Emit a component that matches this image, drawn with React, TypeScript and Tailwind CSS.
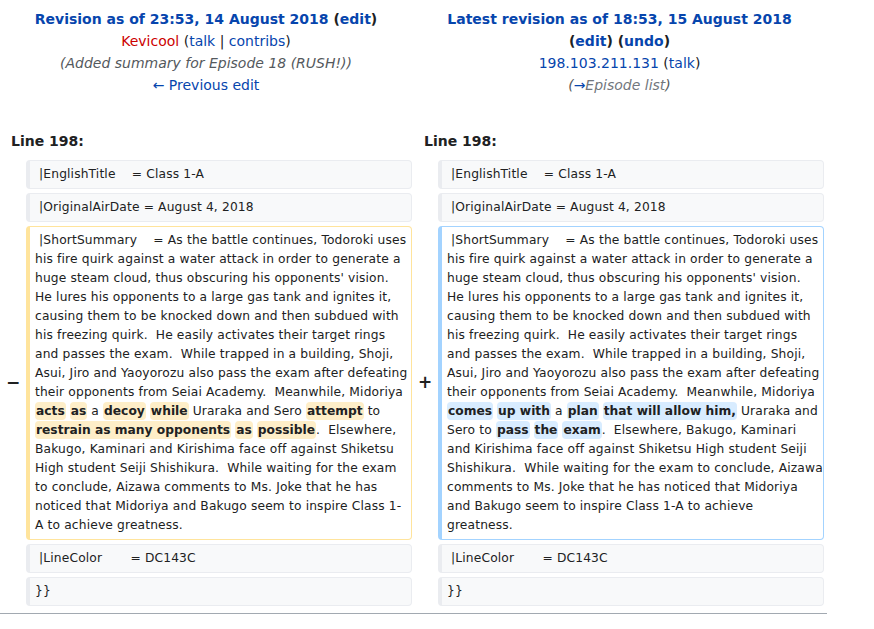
import React from "react";

const Del = ({ children }: { children: React.ReactNode }) => (
  <span className="bg-[#feeec8] font-bold tracking-normal rounded-[4px] px-[1px] py-[2px]">{children}</span>
);
const Add = ({ children }: { children: React.ReactNode }) => (
  <span className="bg-[#d8ecff] font-bold tracking-normal rounded-[4px] px-[1px] py-[2px]">{children}</span>
);

const boxBase =
  "rounded-[4px] border border-l-4 pl-[5px] py-[4px] whitespace-pre-wrap break-words text-[12.25px] leading-[19px] tracking-[0.15px]";

const Ctx = ({ children }: { children: React.ReactNode }) => (
  <div className={`${boxBase} pr-[2px] bg-[#f8f9fa] border-[#eaecf0]`}>{children}</div>
);

const ContextRow = ({ text }: { text: string }) => (
  <>
    <div />
    <Ctx>{text}</Ctx>
    <div />
    <Ctx>{text}</Ctx>
  </>
);

const link = "text-[#0645ad]";

export default function App() {
  return (
    <div className="w-[827px] font-['DejaVu_Sans',sans-serif] text-[#202122] bg-white">
      {/* Header */}
      <div className="grid grid-cols-[412px_415px] pt-[8px] text-[14px] leading-[22px]">
        <div className="text-center">
          <div className="font-bold">
            <span className={link}>Revision as of 23:53, 14 August 2018</span>{" "}
            (<span className={link}>edit</span>)
          </div>
          <div>
            <span className="text-[#cc0000]">Kevicool</span> (
            <span className={link}>talk</span> | <span className={link}>contribs</span>)
          </div>
          <div className="italic text-[#54595d]">(Added summary for Episode 18 (RUSH!))</div>
          <div className={link}>← Previous edit</div>
        </div>
        <div className="text-center">
          <div className="font-bold">
            <span className={link}>Latest revision as of 18:53, 15 August 2018</span>
          </div>
          <div className="font-bold">
            (<span className={link}>edit</span>) (<span className={link}>undo</span>)
          </div>
          <div>
            <span className={link}>198.103.211.131</span> (<span className={link}>talk</span>)
          </div>
          <div className="italic text-[#54595d]">
            (<span className={link}>→</span>
            <span className="text-[#72777d]">Episode list</span>)
          </div>
        </div>
      </div>

      {/* Line numbers */}
      <div className="grid grid-cols-[412px_415px] mt-[34px] text-[14px] leading-[22px] font-bold">
        <div className="pl-[11px]">Line 198:</div>
        <div className="pl-[12px]">Line 198:</div>
      </div>

      {/* Diff rows */}
      <div className="grid grid-cols-[26px_386px_26px_386px] gap-y-[4px] mt-[8px] text-[#202122]">
        <ContextRow text={" |EnglishTitle    = Class 1-A"} />
        <ContextRow text={" |OriginalAirDate = August 4, 2018"} />

        <div className="flex items-center justify-center text-[17px] font-bold">−</div>
        <div className={`${boxBase} pr-[2px] bg-white border-[#ffe49c]`}>
          {" |ShortSummary    = As the battle continues, Todoroki uses his fire quirk against a water attack in order to generate a huge steam cloud, thus obscuring his opponents' vision.  He lures his opponents to a large gas tank and ignites it, causing them to be knocked down and then subdued with his freezing quirk.  He easily activates their target rings and passes the exam.  While trapped in a building, Shoji, Asui, Jiro and Yaoyorozu also pass the exam after defeating their opponents from Seiai Academy.  Meanwhile, Midoriya "}
          <Del>acts</Del> <Del>as</Del> a <Del>decoy</Del> <Del>while</Del> Uraraka and Sero{" "}
          <Del>attempt</Del> to <Del>restrain as many opponents</Del> <Del>as</Del>{" "}
          <Del>possible</Del>
          {".  Elsewhere, Bakugo, Kaminari and Kirishima face off against Shiketsu High student Seiji Shishikura.  While waiting for the exam to conclude, Aizawa comments to Ms. Joke that he has noticed that Midoriya and Bakugo seem to inspire Class 1-A to achieve greatness."}
        </div>
        <div className="flex items-center justify-center text-[17px] font-bold">+</div>
        <div className={`${boxBase} pr-0 bg-white border-[#a3d3ff]`}>
          {" |ShortSummary    = As the battle continues, Todoroki uses his fire quirk against a water attack in order to generate a huge steam cloud, thus obscuring his opponents' vision.  He lures his opponents to a large gas tank and ignites it, causing them to be knocked down and then subdued with his freezing quirk.  He easily activates their target rings and passes the exam.  While trapped in a building, Shoji, Asui, Jiro and Yaoyorozu also pass the exam after defeating their opponents from Seiai Academy.  Meanwhile, Midoriya "}
          <Add>comes</Add> <Add>up with</Add> a <Add>plan</Add> <Add>that will allow him,</Add> Uraraka and
          Sero to <Add>pass</Add> <Add>the</Add> <Add>exam</Add>
          {".  Elsewhere, Bakugo, Kaminari and Kirishima face off against Shiketsu High student Seiji Shishikura.  While waiting for the exam to conclude, Aizawa comments to Ms. Joke that he has noticed that Midoriya and Bakugo seem to inspire Class 1-A to achieve greatness."}
        </div>

        <ContextRow text={" |LineColor       = DC143C"} />
        <ContextRow text={"}}"} />
      </div>

      <div className="mt-[7px] h-px bg-[#a2a9b1]" />
    </div>
  );
}
